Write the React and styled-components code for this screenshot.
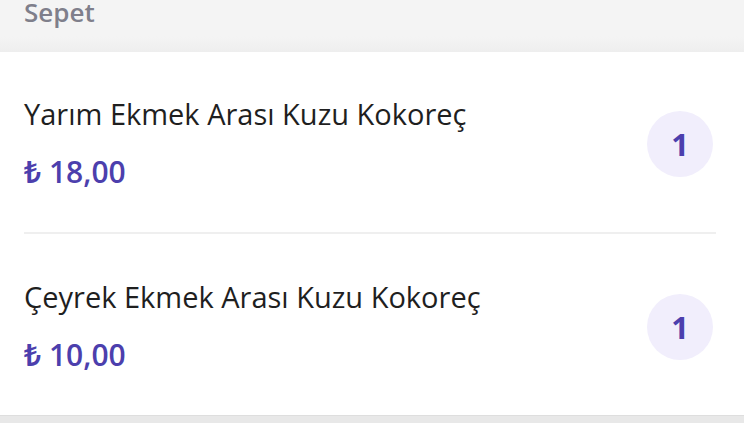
import React from 'react'
import styled, { createGlobalStyle } from 'styled-components'

const GlobalStyle = createGlobalStyle`
  html, body {
    margin: 0;
    padding: 0;
    background: #e8e8e8;
    font-family: 'Open Sans', 'Noto Sans', sans-serif;
  }
`

const Page = styled.div`
  width: 744px;
  height: 423px;
  overflow: hidden;
  display: flex;
  flex-direction: column;
  background: #e8e8e8;
`

const Header = styled.div`
  height: 52px;
  flex-shrink: 0;
  background: linear-gradient(#f4f4f4 0%, #f4f4f4 70%, #eeeeee 100%);
  display: flex;
  align-items: flex-start;
  padding: 0 24px;
  box-sizing: border-box;
`

const HeaderTitle = styled.div`
  margin-top: -6px;
  font-size: 26px;
  font-weight: 600;
  color: #7f7f8b;
  line-height: 36px;
`

const List = styled.div`
  background: #fff;
  height: 364px;
  flex-shrink: 0;
  padding: 0 28px 0 24px;
  box-sizing: border-box;
  border-bottom: 1px solid #dedede;
`

const Item = styled.div`
  height: 182px;
  display: flex;
  align-items: center;
  justify-content: space-between;
  border-bottom: ${p => (p.$last ? 'none' : '2px solid #efefef')};
  box-sizing: border-box;
`

const Info = styled.div`
  display: flex;
  flex-direction: column;
  gap: 16px;
  padding-top: 2px;
`

const Name = styled.div`
  font-size: 29px;
  font-weight: 500;
  color: #1f1f1f;
  line-height: 40px;
`

const Price = styled.div`
  font-size: 30px;
  font-weight: 600;
  color: #4c3fad;
  line-height: 40px;
  margin-top: 2px;
`

const Qty = styled.div`
  width: 66px;
  height: 66px;
  margin: 4px 3px 0 0;
  border-radius: 50%;
  background: #f1eefc;
  color: #4c3fad;
  font-size: 31px;
  font-weight: 700;
  display: flex;
  align-items: center;
  justify-content: center;
`

const items = [
  { name: 'Yarım Ekmek Arası Kuzu Kokoreç', price: '18,00', qty: 1 },
  { name: 'Çeyrek Ekmek Arası Kuzu Kokoreç', price: '10,00', qty: 1 },
]

export default function App() {
  return (
    <Page>
      <GlobalStyle />
      <Header>
        <HeaderTitle>Sepet</HeaderTitle>
      </Header>
      <List>
        {items.map((it, i) => (
          <Item key={i} $last={i === items.length - 1}>
            <Info>
              <Name>{it.name}</Name>
              <Price>₺ {it.price}</Price>
            </Info>
            <Qty>{it.qty}</Qty>
          </Item>
        ))}
      </List>
    </Page>
  )
}
